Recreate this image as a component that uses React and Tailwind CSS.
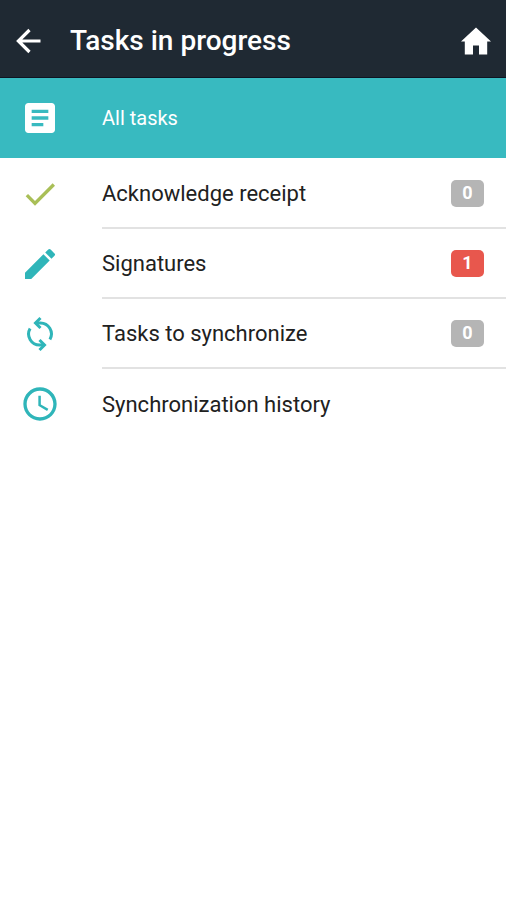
import { MdArticle, MdCheck, MdEdit, MdAccessTime } from "react-icons/md";
import clsx from "clsx";
import React from "react";

function BackIcon({ className }) {
  return (
    <svg
      viewBox="0 0 36 36"
      fill="none"
      stroke="currentColor"
      strokeWidth="3.2"
      className={className}
      aria-hidden="true"
    >
      <path d="M30.5 18H8M19.5 7 8.4 18l11.1 11" />
    </svg>
  );
}

function HomeIcon({ className }) {
  return (
    <svg viewBox="0 0 36 36" fill="currentColor" className={className} aria-hidden="true">
      <path d="M18 4.5 3 18.5h3.8v13h8.2v-9h6v9h8.2v-13H33z" />
    </svg>
  );
}

/* two open arcs with chevron heads */
function SyncIcon({ className }) {
  return (
    <svg
      viewBox="0 0 40 40"
      fill="none"
      stroke="currentColor"
      strokeWidth="3"
      className={className}
      aria-hidden="true"
    >
      <path d="M16.5 9H20A11 11 0 0 1 29.9 25.5" />
      <path d="M23.5 31H20A11 11 0 0 1 10.1 14.5" />
      <path d="M20.5 4 15.5 9l5 5M19.5 36l5-5-5-5" />
    </svg>
  );
}

const TASKS = [
  { label: "Acknowledge receipt", icon: MdCheck, color: "text-[#a9bf57]", count: 0 },
  { label: "Signatures", icon: MdEdit, color: "text-[#2fb5b9]", count: 1 },
  { label: "Tasks to synchronize", icon: SyncIcon, color: "text-[#2fb5b9]", count: 0 },
  { label: "Synchronization history", icon: MdAccessTime, color: "text-[#2fb5b9]" },
];

function Badge({ count }) {
  return (
    <span
      className={clsx(
        "flex h-[27px] w-[33px] items-center justify-center rounded-[5px] text-lg font-bold text-white",
        count > 0 ? "bg-[#e8574d]" : "bg-[#b5b5b5]"
      )}
    >
      {count}
    </span>
  );
}

function TaskRow({ task, last }) {
  const Icon = task.icon;

  return (
    <li>
      <button type="button" className="flex w-full items-center pl-5 text-left">
        <Icon className={clsx("size-10 shrink-0", task.color)} />
        <span
          className={clsx(
            "ml-[42px] flex h-[70px] grow items-center justify-between pr-[22px]",
            !last && "border-b-2 border-[#e2e2e2]"
          )}
        >
          <span className="text-[22px]">{task.label}</span>
          {task.count !== undefined && <Badge count={task.count} />}
        </span>
      </button>
    </li>
  );
}

export default function App() {
  return (
    <div className="min-h-screen bg-white font-[Roboto,sans-serif] text-[#212121]">
      <header className="flex h-[78px] items-center border-b border-[#0e1422] bg-[#1f2933] pt-1 pr-3 pl-2.5 text-white">
        <button type="button" aria-label="Back">
          <BackIcon className="size-9" />
        </button>
        <h1 className="ml-6 grow text-[28px] font-medium">Tasks in progress</h1>
        <button type="button" aria-label="Home">
          <HomeIcon className="size-9" />
        </button>
      </header>

      <main>
        <button
          type="button"
          className="flex h-20 w-full items-center bg-[#38bac0] pl-5 text-left text-white"
        >
          <MdArticle className="size-10" />
          <span className="ml-[42px] text-xl">All tasks</span>
        </button>

        <ul className="pt-px">
          {TASKS.map((task, i) => (
            <TaskRow key={task.label} task={task} last={i === TASKS.length - 1} />
          ))}
        </ul>
      </main>
    </div>
  );
}
